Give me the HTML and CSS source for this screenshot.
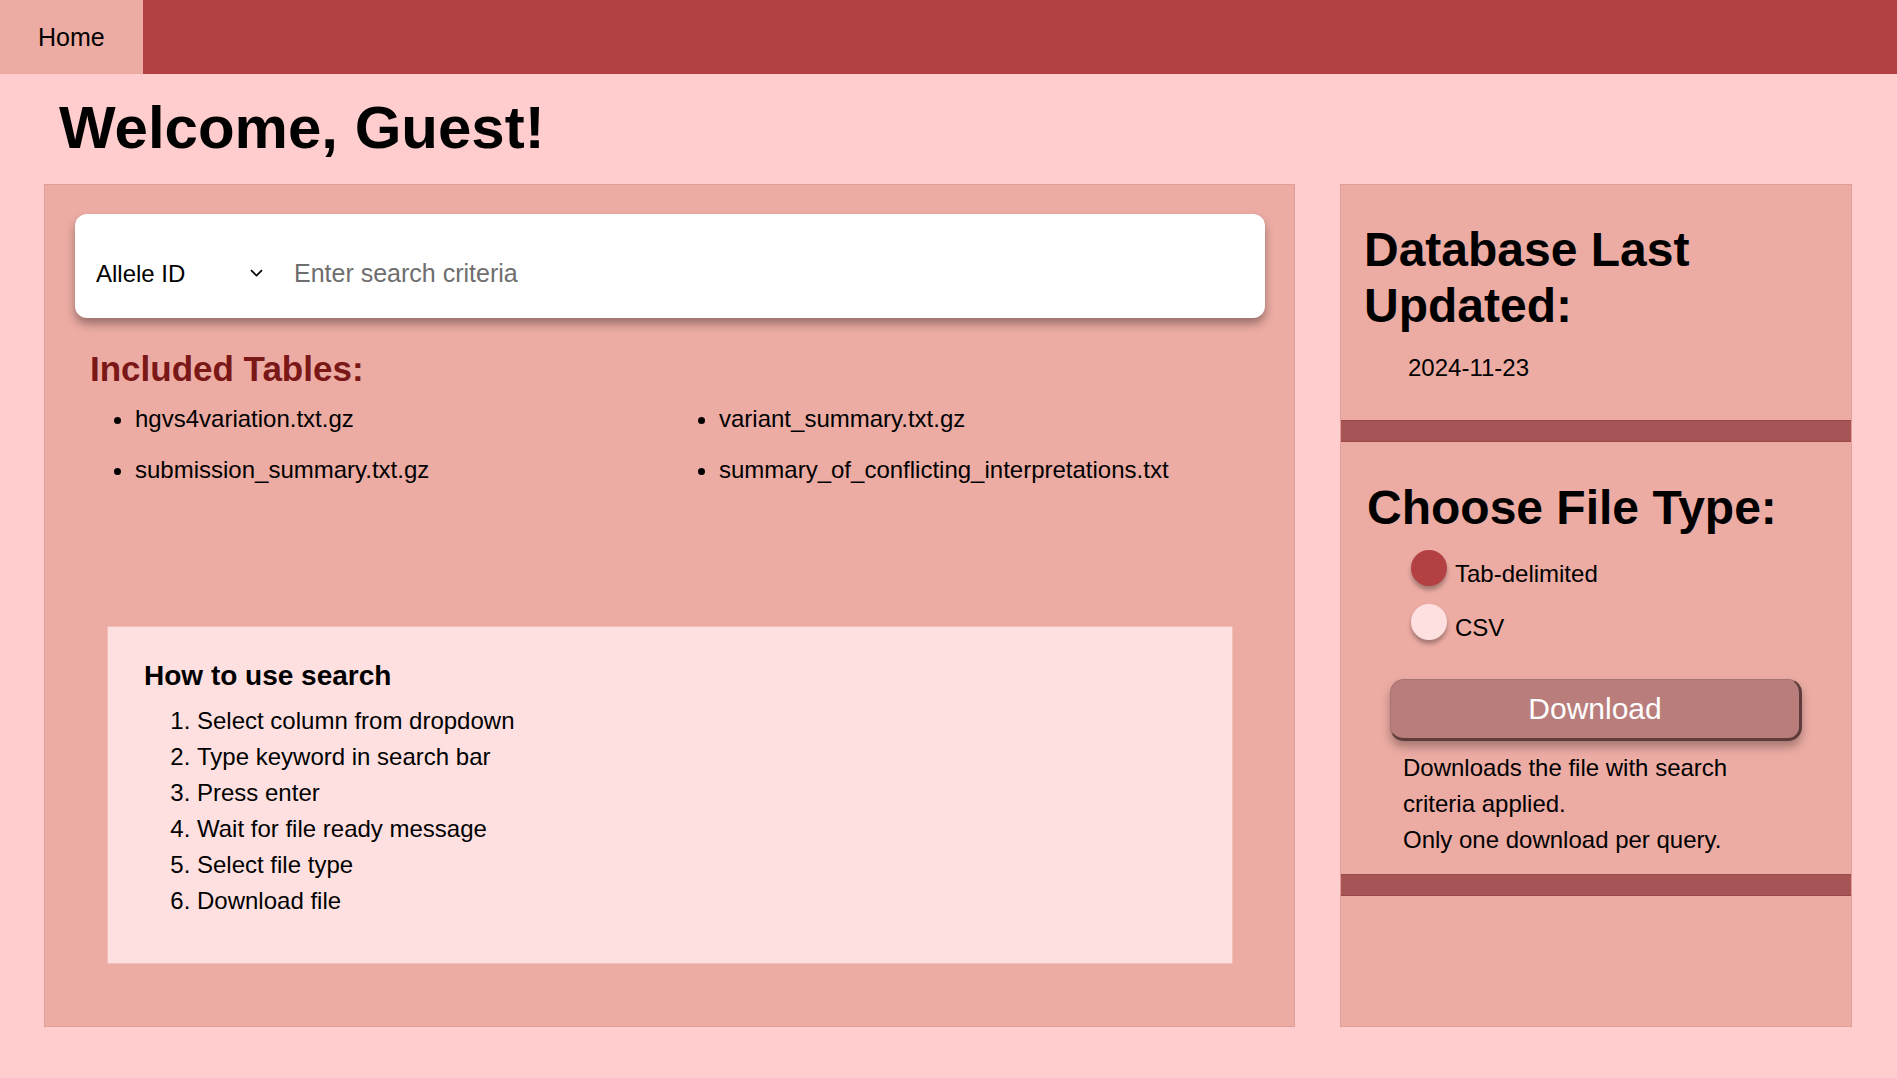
FILE: index.html
```html
<!DOCTYPE html>
<html lang="en">
<head>
    <meta charset="UTF-8">
    <title>ClinVar Search</title>
    <link rel="stylesheet" href="styles.css">
</head>
<body>
    <nav class="topnav">
        <a class="nav-link active" href="#">Home</a>
    </nav>

    <h1 class="welcome">Welcome, Guest!</h1>

    <main class="dashboard">
        <section class="search-panel">
            <div class="search-bar">
                <div class="column-select">
                    <select id="columnSelect">
                        <option>Allele ID</option>
                        <option>Gene Symbol</option>
                        <option>HGVS</option>
                        <option>Variation ID</option>
                    </select>
                    <svg class="chevron" width="13" height="8" viewBox="0 0 13 8">
                        <path d="M1 1.2l5.5 5.3L12 1.2" fill="none" stroke="#000" stroke-width="1.7"/>
                    </svg>
                </div>
                <input type="text" id="searchInput" placeholder="Enter search criteria">
            </div>

            <h2 class="tables-title">Included Tables:</h2>
            <ul class="table-list">
                <li>hgvs4variation.txt.gz</li>
                <li>variant_summary.txt.gz</li>
                <li>submission_summary.txt.gz</li>
                <li>summary_of_conflicting_interpretations.txt</li>
            </ul>

            <div class="help-box">
                <h3>How to use search</h3>
                <ol>
                    <li>Select column from dropdown</li>
                    <li>Type keyword in search bar</li>
                    <li>Press enter</li>
                    <li>Wait for file ready message</li>
                    <li>Select file type</li>
                    <li>Download file</li>
                </ol>
            </div>
        </section>

        <aside class="side-panel">
            <div class="side-section updated">
                <h2>Database Last Updated:</h2>
                <p class="update-date">2024-11-23</p>
            </div>
            <div class="divider"></div>
            <div class="side-section file-type">
                <h2>Choose File Type:</h2>
                <label class="radio-row">
                    <input type="radio" name="fileType" value="tsv" checked>
                    <span>Tab-delimited</span>
                </label>
                <label class="radio-row">
                    <input type="radio" name="fileType" value="csv">
                    <span>CSV</span>
                </label>
                <button class="download-btn">Download</button>
                <p class="download-note">Downloads the file with search criteria applied.<br>Only one download per query.</p>
            </div>
            <div class="divider"></div>
        </aside>
    </main>
</body>
</html>
```

FILE: styles.css
```css
*, *::before, *::after { box-sizing: border-box; }

body {
    margin: 0;
    background: #ffcdcd;
    color: #000;
    font-family: "Liberation Sans", Arial, Helvetica, sans-serif;
}

/* top bar */
.topnav { display: flex; height: 74px; background: #b34042; }
.nav-link {
    display: flex;
    align-items: center;
    padding: 0 38px;
    background: #ecaca4;
    color: #000;
    font-size: 25px;
    text-decoration: none;
}

.welcome { margin: 19px 0 22px 59px; font-size: 60px; line-height: 69px; }

.dashboard { display: flex; gap: 45px; padding: 0 45px 0 44px; }

/* left column */
.search-panel {
    flex: 1;
    background: #ecaca4;
    border: 1px solid #e39d97;
    padding: 29px 29px 62px 30px;
}
.search-bar {
    display: flex;
    align-items: center;
    height: 104px;
    padding: 14px 20px 0;
    background: #fff;
    border-radius: 12px;
    box-shadow: 0 6px 10px rgba(0, 0, 0, 0.35);
}
.column-select { display: flex; align-items: center; }
.column-select select {
    appearance: none;
    -webkit-appearance: none;
    width: 155px;
    padding: 0 0 0 1px;
    border: none;
    background: transparent;
    color: #000;
    font: 24px "Liberation Sans", Arial, sans-serif;
    outline: none;
}
.chevron { display: block; }
.search-bar input {
    flex: 1;
    margin-left: 31px;
    padding: 0;
    border: none;
    background: transparent;
    font: 25px "Liberation Sans", Arial, sans-serif;
    outline: none;
}
.search-bar input::placeholder { color: #6e6e6e; }

.tables-title { margin: 31px 0 12px 15px; font-size: 35px; line-height: 40px; color: #7a1717; }
.table-list {
    display: grid;
    grid-template-columns: 584px 1fr;
    row-gap: 15px;
    margin: 0;
    padding-left: 60px;
    font-size: 24px;
    line-height: 36px;
}

.help-box {
    margin: 138px 32px 0;
    padding: 33px 36px 44px;
    background: #ffe0e0;
    border: 1px solid #f0bdb9;
}
.help-box h3 { margin: 0 0 11px; font-size: 28px; line-height: 32px; }
.help-box ol { margin: 0; padding-left: 53px; font-size: 24px; line-height: 36px; }

/* right column */
.side-panel {
    display: flex;
    flex-direction: column;
    width: 512px;
    background: #ecaca4;
    border: 1px solid #e39d97;
}
.side-section h2 { margin: 0; font-size: 48px; line-height: 56px; }
.updated { padding: 37px 0 39px 23px; }
.update-date { margin: 20px 0 0 44px; font-size: 24px; line-height: 27px; }

.divider {
    height: 22px;
    background: #a65456;
    border-top: 1px solid #9a4749;
    border-bottom: 1px solid #9a4749;
}

.file-type { padding: 38px 0 16px 26px; }
.radio-row {
    display: flex;
    align-items: flex-start;
    gap: 8px;
    margin: 14px 0 0 44px;
    font-size: 24px;
    cursor: pointer;
}
.radio-row + .radio-row { margin-top: 17px; }
.radio-row span { padding-top: 10px; line-height: 27px; }
.radio-row input {
    appearance: none;
    -webkit-appearance: none;
    width: 36px;
    height: 36px;
    margin: 0;
    border-radius: 50%;
    background: #ffe0e0;
    box-shadow: 0 4px 4px rgba(0, 0, 0, 0.3);
    cursor: pointer;
}
.radio-row input:checked { background: #b34042; }

.download-btn {
    display: block;
    width: 412px;
    height: 62px;
    margin: 38px 0 0 23px;
    background: #b97e7c;
    color: #fff;
    font: 30px "Liberation Sans", Arial, sans-serif;
    border: 1px solid #a87270;
    border-right: 3px solid #5e3c3c;
    border-bottom: 3px solid #5e3c3c;
    border-radius: 14px;
    box-shadow: 0 6px 10px rgba(0, 0, 0, 0.3);
    cursor: pointer;
}
.download-btn:hover { background: #c48886; }

.download-note { width: 380px; margin: 9px 0 0 36px; font-size: 24px; line-height: 36px; }
```
